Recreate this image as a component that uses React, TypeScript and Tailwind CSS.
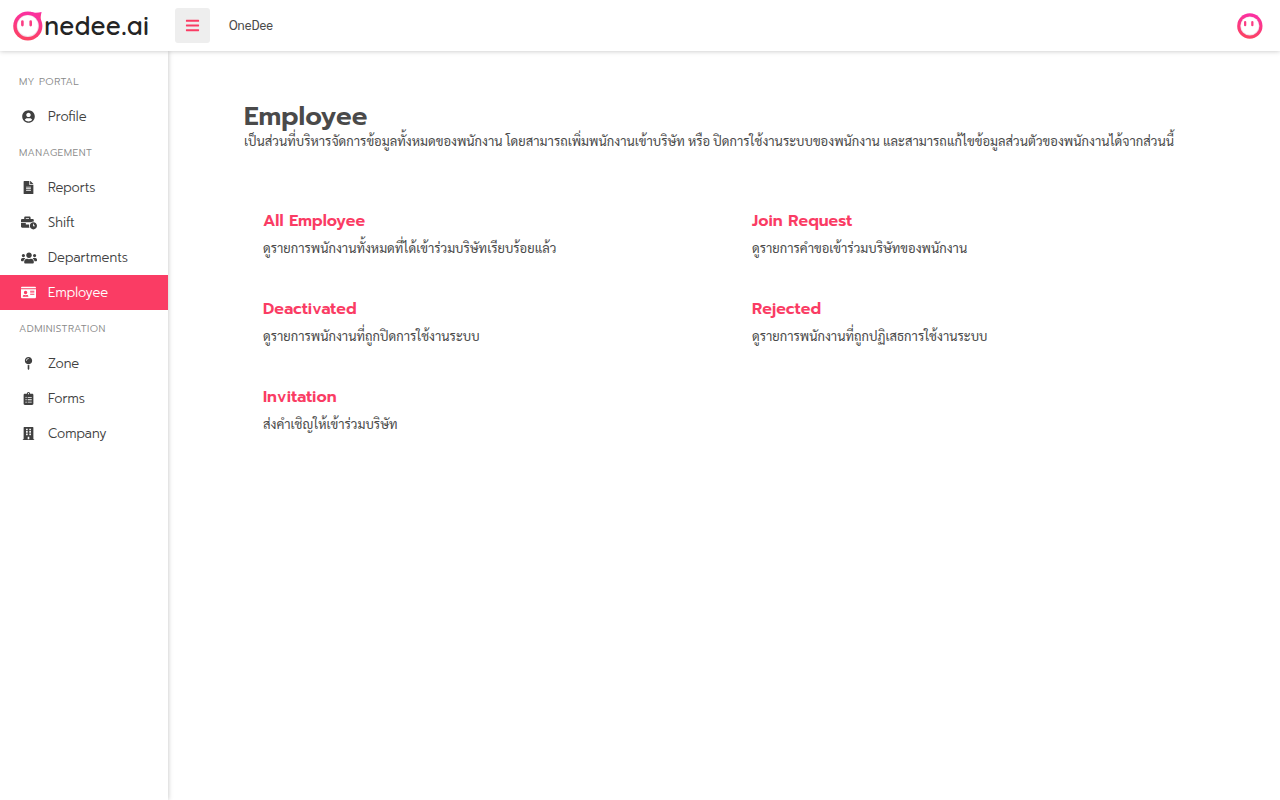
import type { IconType } from "react-icons";
import {
  FaBars,
  FaBuilding,
  FaBusinessTime,
  FaClipboardList,
  FaFileAlt,
  FaIdCard,
  FaMapPin,
  FaUserCircle,
  FaUsers,
} from "react-icons/fa";

type NavItem = { label: string; icon: IconType; size: string; active?: boolean };
type NavGroup = { title: string; items: NavItem[] };

const groups: NavGroup[] = [
  { title: "MY PORTAL", items: [{ label: "Profile", icon: FaUserCircle, size: "size-[13px]" }] },
  {
    title: "MANAGEMENT",
    items: [
      { label: "Reports", icon: FaFileAlt, size: "size-[13px]" },
      { label: "Shift", icon: FaBusinessTime, size: "size-4" },
      { label: "Departments", icon: FaUsers, size: "size-4" },
      { label: "Employee", icon: FaIdCard, size: "size-[15px]", active: true },
    ],
  },
  {
    title: "ADMINISTRATION",
    items: [
      { label: "Zone", icon: FaMapPin, size: "size-[13px]" },
      { label: "Forms", icon: FaClipboardList, size: "size-[13px]" },
      { label: "Company", icon: FaBuilding, size: "size-[13px]" },
    ],
  },
];

const sections = [
  { title: "All Employee", text: "ดูรายการพนักงานทั้งหมดที่ได้เข้าร่วมบริษัทเรียบร้อยแล้ว" },
  { title: "Join Request", text: "ดูรายการคำขอเข้าร่วมบริษัทของพนักงาน" },
  { title: "Deactivated", text: "ดูรายการพนักงานที่ถูกปิดการใช้งานระบบ" },
  { title: "Rejected", text: "ดูรายการพนักงานที่ถูกปฏิเสธการใช้งานระบบ" },
  { title: "Invitation", text: "ส่งคำเชิญให้เข้าร่วมบริษัท" },
];

function Face({ id, tail, className }: { id: string; tail?: boolean; className: string }) {
  return (
    <svg viewBox="0 0 30 30" className={className} aria-hidden="true">
      <defs>
        <linearGradient id={id} x1="0.6" y1="0" x2="0.4" y2="1">
          <stop offset="0" stopColor="#fb2fa5" />
          <stop offset="1" stopColor="#fc4360" />
        </linearGradient>
      </defs>
      {tail && <path d="M17 .8C21 2 25 1.8 28.6 .9c-.9 3.4-1.2 6-.6 9z" fill={`url(#${id})`} />}
      <circle cx="14.8" cy="15" r="14.6" fill={`url(#${id})`} />
      <circle cx="14.8" cy="15" r="11" fill="#f0e2e9" />
      <circle cx="14.8" cy="14.7" r="10.2" fill="#fff" />
      <rect x="8.1" y="9.2" width="2.6" height="6.2" rx="1.3" fill="#fb3d83" />
      <rect x="16.4" y="9.2" width="2.6" height="6.2" rx="1.3" fill="#fb3d83" />
    </svg>
  );
}

export default function App() {
  return (
    <div className="flex min-h-screen flex-col bg-white font-['Prompt','Noto_Sans',sans-serif] text-[#4a4a4a]">
      <header className="relative z-10 flex h-[51px] items-center bg-white pr-[17px] shadow-[0_0_5px_rgba(0,0,0,0.25)]">
        <a href="#" aria-label="Onedee.ai" className="flex w-[169px] shrink-0 items-center gap-px pl-[13px]">
          <Face id="logo-face" tail className="size-[30px] shrink-0" />
          <span className="font-['Quicksand','Lato',sans-serif] text-[26px] leading-[30px] font-semibold text-[#242424]">
            nedee.ai
          </span>
        </a>
        <button
          type="button"
          aria-label="Toggle menu"
          className="ml-[6px] flex size-[35px] items-center justify-center rounded-[3px] bg-[#eeeeee] text-[#fa3c64]"
        >
          <FaBars className="size-[15px]" />
        </button>
        <span className="ml-[19px] pb-0.5 font-['Sarabun','Roboto',sans-serif] text-[13px]">OneDee</span>
        <button type="button" aria-label="Account" className="ml-auto">
          <Face id="account-face" className="size-[26px]" />
        </button>
      </header>

      <div className="flex flex-1">
        <nav className="w-[168px] shrink-0 bg-white pt-3 shadow-[0_0_5px_rgba(0,0,0,0.25)]">
          {groups.map((group) => (
            <section key={group.title}>
              <h2 className="flex h-9 items-center pl-[19px] text-[10px] font-light tracking-wider text-[#888888]">
                {group.title}
              </h2>
              <ul>
                {group.items.map(({ label, icon: Icon, size, active }) => (
                  <li key={label}>
                    <a
                      href="#"
                      aria-current={active ? "page" : undefined}
                      className={`flex h-[35px] items-center gap-[11px] pl-5 text-[13px] font-light ${
                        active ? "bg-[#fa3c64] text-white" : "text-[#404040]"
                      }`}
                    >
                      <span className="flex w-[17px] justify-center">
                        <Icon className={size} />
                      </span>
                      {label}
                    </a>
                  </li>
                ))}
              </ul>
            </section>
          ))}
        </nav>

        <main className="min-w-0 flex-1 pt-[50px] pr-[58px] pl-[76px]">
          <h1 className="text-[26px] leading-8 font-semibold">Employee</h1>
          <p className="font-['Sarabun','Noto_Sans_Thai',sans-serif] text-[13px] leading-4">
            เป็นส่วนที่บริหารจัดการข้อมูลทั้งหมดของพนักงาน โดยสามารถเพิ่มพนักงานเข้าบริษัท หรือ
            ปิดการใช้งานระบบของพนักงาน และสามารถแก้ไขข้อมูลส่วนตัวของพนักงานได้จากส่วนนี้
          </p>
          <div className="mt-[60px] grid grid-cols-2 gap-y-[37px]">
            {sections.map(({ title, text }) => (
              <a key={title} href="#" className="block px-[19px]">
                <h2 className="text-base leading-6 font-semibold text-[#fa3c64]">{title}</h2>
                <p className="mt-[3px] font-['Sarabun','Noto_Sans_Thai',sans-serif] text-[13px] leading-6">{text}</p>
              </a>
            ))}
          </div>
        </main>
      </div>
    </div>
  );
}
